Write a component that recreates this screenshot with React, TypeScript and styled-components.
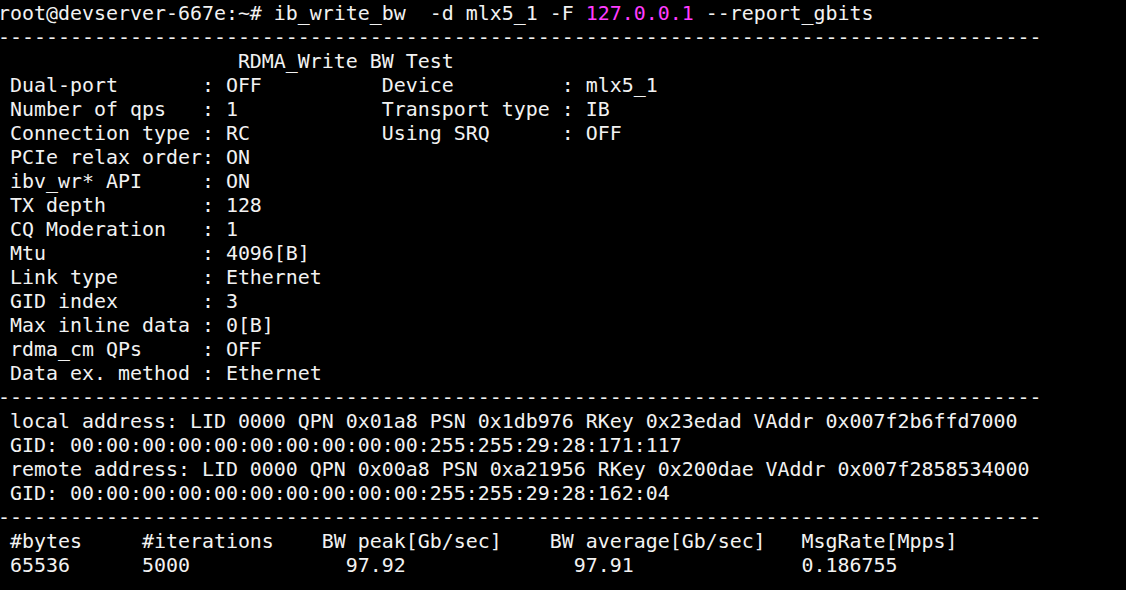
import React from "react";
import styled, { createGlobalStyle } from "styled-components";

const Global = createGlobalStyle`
  html, body {
    margin: 0;
    padding: 0;
    background: #000000;
  }
  body {
    width: 1126px;
    height: 590px;
    overflow: hidden;
  }
`;

const Terminal = styled.div`
  width: 1126px;
  height: 590px;
  background: #000000;
  overflow: hidden;
  padding-top: 2px;
  box-sizing: border-box;
`;

const Screen = styled.pre`
  margin: 0 0 0 -2px;
  padding: 0;
  font-family: "DejaVu Sans Mono", "Liberation Mono", monospace;
  font-size: 19.93px;
  line-height: 24px;
  color: #f2f2f2;
  white-space: pre;
  tab-size: 8;
`;

const Line = styled.div`
  height: 24px;
`;

const Highlight = styled.span`
  color: #ff3cff;
`;

const DASHES = "-".repeat(87);

const lines: string[] = [
  "                    RDMA_Write BW Test",
  " Dual-port       : OFF          Device         : mlx5_1",
  " Number of qps   : 1            Transport type : IB",
  " Connection type : RC           Using SRQ      : OFF",
  " PCIe relax order: ON",
  " ibv_wr* API     : ON",
  " TX depth        : 128",
  " CQ Moderation   : 1",
  " Mtu             : 4096[B]",
  " Link type       : Ethernet",
  " GID index       : 3",
  " Max inline data : 0[B]",
  " rdma_cm QPs     : OFF",
  " Data ex. method : Ethernet",
  DASHES,
  " local address: LID 0000 QPN 0x01a8 PSN 0x1db976 RKey 0x23edad VAddr 0x007f2b6ffd7000",
  " GID: 00:00:00:00:00:00:00:00:00:00:255:255:29:28:171:117",
  " remote address: LID 0000 QPN 0x00a8 PSN 0xa21956 RKey 0x200dae VAddr 0x007f2858534000",
  " GID: 00:00:00:00:00:00:00:00:00:00:255:255:29:28:162:04",
  DASHES,
  " #bytes     #iterations    BW peak[Gb/sec]    BW average[Gb/sec]   MsgRate[Mpps]",
  " 65536      5000             97.92              97.91              0.186755",
];

export default function App() {
  return (
    <Terminal>
      <Global />
      <Screen>
        <Line>
          {"root@devserver-667e:~# ib_write_bw  -d mlx5_1 -F "}
          <Highlight>127.0.0.1</Highlight>
          {" --report_gbits"}
        </Line>
        <Line>{DASHES}</Line>
        {lines.map((l, i) => (
          <Line key={i}>{l}</Line>
        ))}
      </Screen>
    </Terminal>
  );
}
